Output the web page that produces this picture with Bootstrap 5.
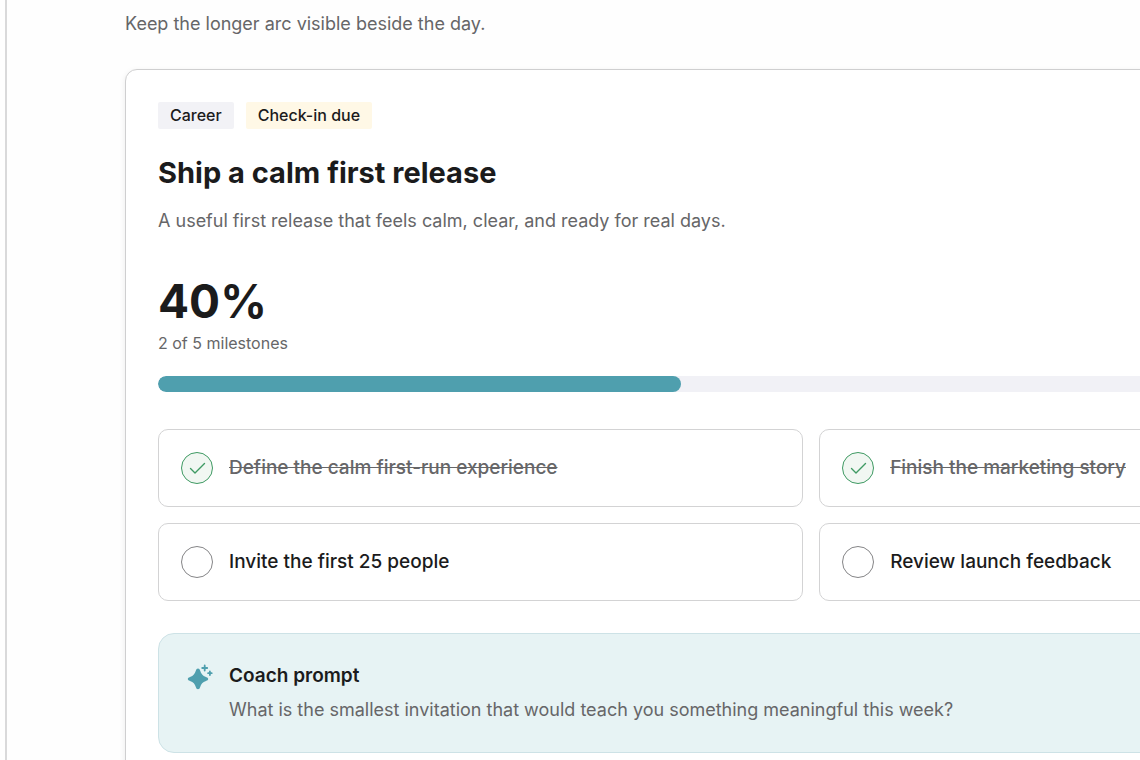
<!DOCTYPE html>
<html lang="en">
<head>
<meta charset="utf-8">
<meta name="viewport" content="width=device-width, initial-scale=1">
<title>Goals</title>
<link href="https://cdn.jsdelivr.net/npm/bootstrap@5.3.0/dist/css/bootstrap.min.css" rel="stylesheet">
<style>
  :root {
    --ink: #1b1b1c;
    --muted-ink: #666668;
    --line: #d3d3d4;
    --teal: #4f9fae;
    --green: #3f9a63;
  }
  body {
    font-family: Inter, "Liberation Sans", sans-serif;
    font-size: 18px;
    line-height: 28px;
    color: var(--ink);
    background: #fefefe;
  }
  .rail { flex: 0 0 7px; border-right: 2px solid #d9d9da; }
  .page { padding: 10px 0 0 118px; min-width: 0; }
  .soft { color: var(--muted-ink); }
  /* The goal card runs wider than its pane and is clipped by it. */
  .goal {
    width: 135.2%;
    margin-top: 31px;
    padding: 32px;
    border: 1px solid #cfcfd0;
    border-radius: 12px;
    background: #fff;
    box-shadow: 0 2px 6px rgba(0, 0, 0, .08);
  }
  .tags { gap: 12px; }
  .tag {
    padding: 2px 12px;
    border-radius: 2px;
    font-size: 16px;
    line-height: 23px;
    font-weight: 500;
    background: #f2f2f6;
  }
  .tag-due { background: #fff8e6; }
  .goal-title { margin: 24px 0 14px; font-size: 29px; line-height: 40px; font-weight: 700; }
  .percent { margin-top: 38px; font-size: 46px; line-height: 56px; font-weight: 700; }
  .count { font-size: 16px; line-height: 28px; }
  .goal-bar { height: 16px; margin-top: 19px; border-radius: 8px; background: #f1f1f6; }
  .goal-bar .progress-bar { border-radius: 8px; background: var(--teal); }
  .steps { display: grid; grid-template-columns: 1fr 1fr; gap: 16px; margin: 37px 0 32px; }
  .step {
    gap: 16px;
    padding: 22px;
    border: 1px solid var(--line);
    border-radius: 10px;
    font-size: 19px;
    line-height: 32px;
    font-weight: 500;
  }
  .step input {
    flex: none;
    appearance: none;
    width: 32px;
    height: 32px;
    border: 1px solid #858587;
    border-radius: 50%;
    background: #fff;
  }
  .step input:checked {
    border-color: var(--green);
    background: #f1f7f2 url("data:image/svg+xml,%3Csvg xmlns='http://www.w3.org/2000/svg' viewBox='0 0 30 30'%3E%3Cpath d='M8.5 15.5l4.500 4.500L22.500 10.500' fill='none' stroke='%233f9a63' stroke-width='1.400' stroke-linecap='round' stroke-linejoin='round'/%3E%3C/svg%3E") center / 30px 30px no-repeat;
  }
  .step input:checked + label { color: var(--muted-ink); text-decoration: line-through; }
  .coach {
    gap: 16px;
    padding: 27px 28px 28px;
    border: 1px solid #cde2e6;
    border-radius: 16px;
    background: #e7f3f4;
  }
  .coach h3 { margin: 0 0 6px; font-size: 19px; line-height: 29px; font-weight: 600; }
</style>
</head>
<body>
<div class="d-flex min-vh-100 overflow-hidden">
  <div class="rail"></div>
  <main class="page flex-grow-1">
    <p class="soft mb-0">Keep the longer arc visible beside the day.</p>
    <article class="goal">
      <div class="d-flex tags">
        <span class="tag">Career</span>
        <span class="tag tag-due">Check-in due</span>
      </div>
      <h2 class="goal-title">Ship a calm first release</h2>
      <p class="soft mb-0">A useful first release that feels calm, clear, and ready for real days.</p>
      <div class="percent">40%</div>
      <div class="count soft">2 of 5 milestones</div>
      <div class="progress goal-bar" role="progressbar" aria-label="Milestones" aria-valuenow="40" aria-valuemin="0" aria-valuemax="100">
        <div class="progress-bar" style="width: 40%"></div>
      </div>
      <div class="steps">
        <div class="step d-flex align-items-center"><input type="checkbox" id="s1" checked><label for="s1">Define the calm first-run experience</label></div>
        <div class="step d-flex align-items-center"><input type="checkbox" id="s2" checked><label for="s2">Finish the marketing story</label></div>
        <div class="step d-flex align-items-center"><input type="checkbox" id="s3"><label for="s3">Invite the first 25 people</label></div>
        <div class="step d-flex align-items-center"><input type="checkbox" id="s4"><label for="s4">Review launch feedback</label></div>
      </div>
      <section class="coach d-flex align-items-start">
        <svg class="flex-shrink-0" width="26" height="32" viewBox="0 0 26 32" aria-hidden="true">
          <path fill="#4f9fae" d="M11 7.500C12.200 7.500 12.700 8.300 13.100 9.500C14.200 12.800 15.500 14.800 19 16C20.400 16.500 21.200 17.100 21.200 18S20.400 19.500 19 20C15.500 21.200 14.200 22.900 13.100 26.200C12.700 27.400 12.200 28.200 11 28.200S9.300 27.400 8.900 26.200C7.800 22.900 6.500 21.200 3 20C1.600 19.500 .800 18.900 .800 18S1.600 16.500 3 16C6.500 14.800 7.800 12.800 8.900 9.500C9.300 8.300 9.800 7.500 11 7.500Z"/>
          <path fill="none" stroke="#4f9fae" stroke-width="1.800" stroke-linecap="round" d="M17.700 4.500v5M15.200 7h5M22.900 10.400v3.600M21.100 12.200h3.600"/>
        </svg>
        <div>
          <h3>Coach prompt</h3>
          <p class="soft mb-0">What is the smallest invitation that would teach you something meaningful this week?</p>
        </div>
      </section>
    </article>
  </main>
</div>
<script src="https://cdn.jsdelivr.net/npm/bootstrap@5.3.0/dist/js/bootstrap.bundle.min.js"></script>
</body>
</html>
